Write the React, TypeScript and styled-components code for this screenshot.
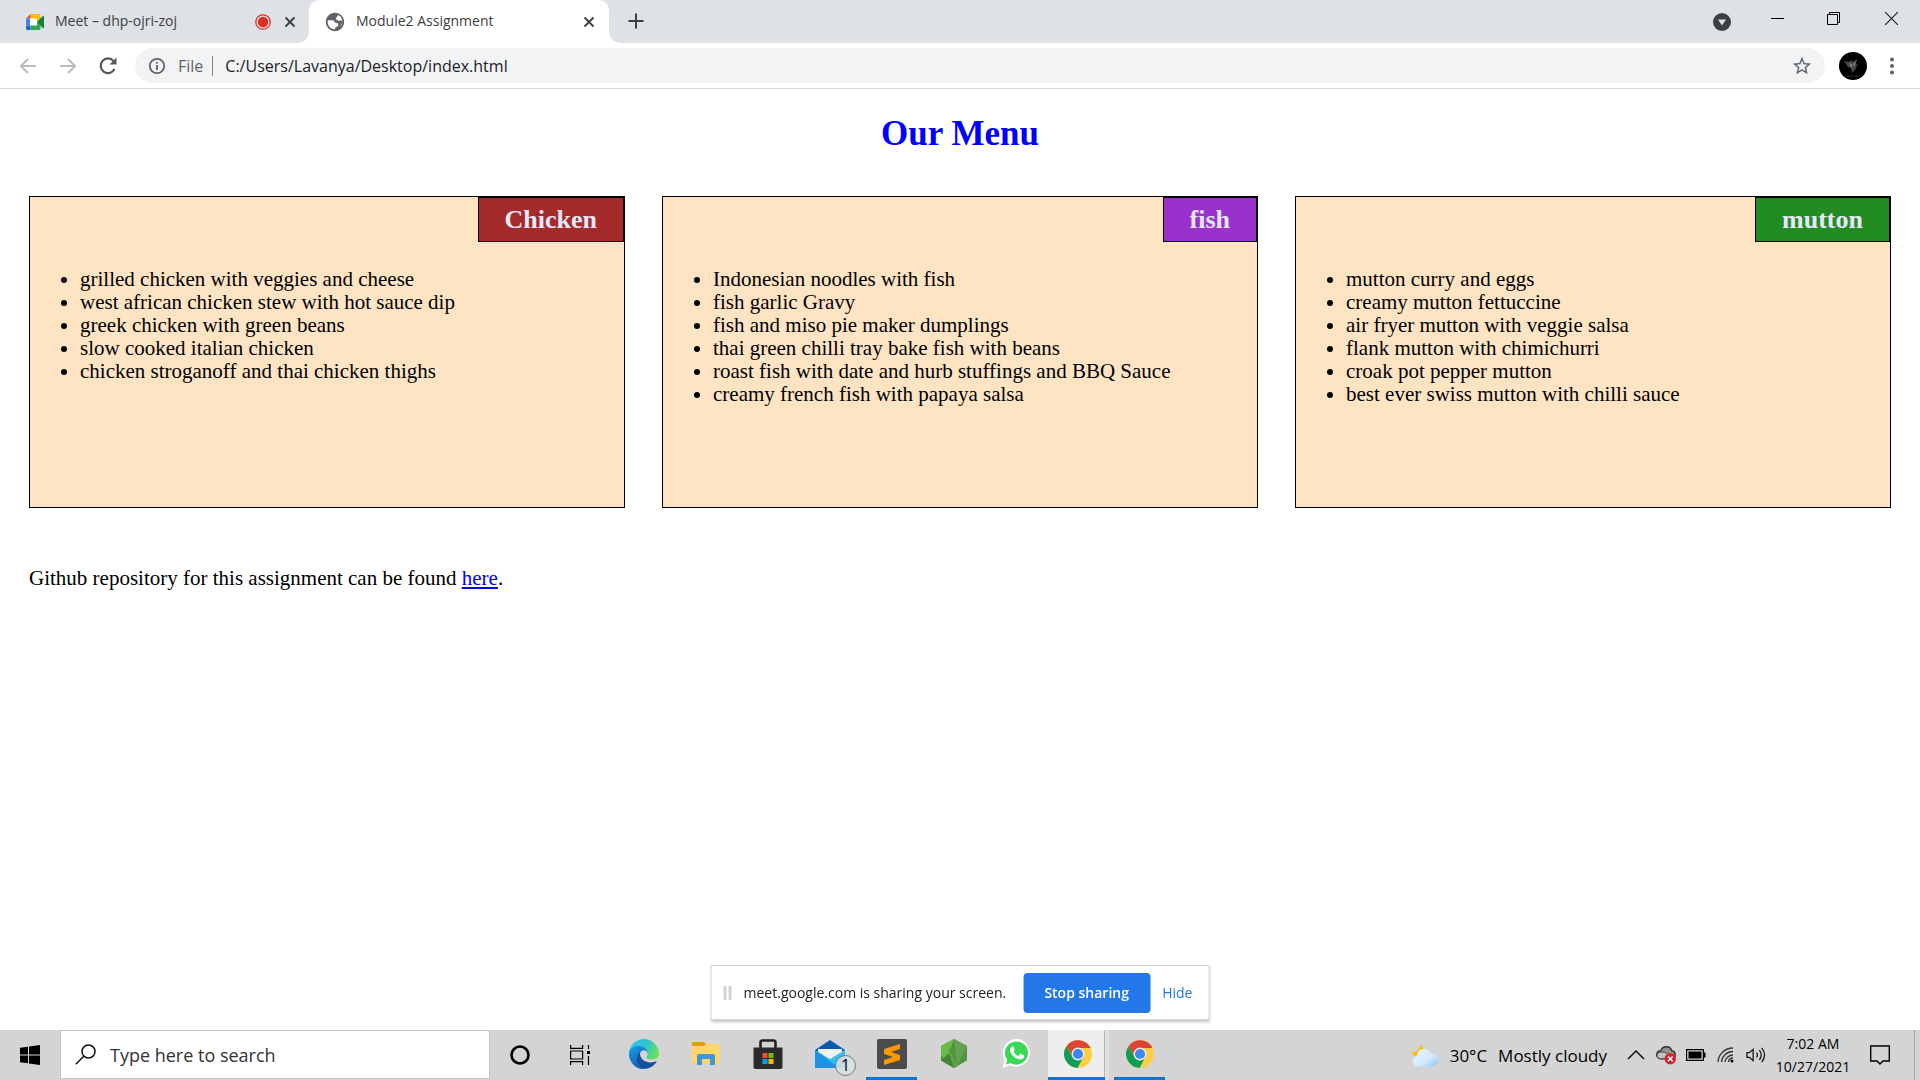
import React from "react";
import styled, { createGlobalStyle } from "styled-components";

const ui = `"Open Sans", "Noto Sans", sans-serif`;
const serif = `"Liberation Serif", serif`;

const GlobalStyle = createGlobalStyle`
  * { box-sizing: border-box; }
  body { margin: 0; background: #fff; }
  button, input { font: inherit; color: inherit; }
`;

const Screen = styled.div`
  min-height: 100vh;
  display: flex;
  flex-direction: column;
  font-family: ${ui};
`;

const IconButton = styled.button<{ $w?: number }>`
  width: ${(p) => p.$w ?? 20}px;
  height: 28px;
  padding: 0;
  border: 0;
  background: none;
  display: flex;
  align-items: center;
  justify-content: center;
  flex: none;
`;

/* ---------- Tab strip ---------- */

const TabStrip = styled.header`
  height: 43px;
  background: #dee1e6;
  display: flex;
  color: #3c4043;
  font-size: 14px;
`;

const Tab = styled.div<{ $active?: boolean }>`
  position: relative;
  width: ${(p) => (p.$active ? 300 : 309)}px;
  padding: 0 ${(p) => (p.$active ? "10px 0 15px" : "9px 0 25px")};
  display: flex;
  align-items: center;
  background: ${(p) => (p.$active ? "#fff" : "transparent")};
  border-radius: 10px 10px 0 0;
  &::before,
  &::after {
    content: "";
    display: ${(p) => (p.$active ? "block" : "none")};
    position: absolute;
    bottom: 0;
    width: 10px;
    height: 10px;
  }
  &::before {
    left: -10px;
    background: radial-gradient(circle at 0 0, transparent 9px, #fff 10px);
  }
  &::after {
    right: -10px;
    background: radial-gradient(circle at 100% 0, transparent 9px, #fff 10px);
  }
`;

const TabTitle = styled.button`
  flex: 1;
  padding: 0 0 2px 10px;
  border: 0;
  background: none;
  text-align: left;
  white-space: nowrap;
`;

const TabTools = styled.div`
  display: flex;
  align-items: center;
  gap: 9px;
`;

const NewTab = styled(IconButton)`
  margin: 7px 0 0 17px;
`;

const WindowTools = styled.div`
  margin-left: auto;
  display: flex;
  align-items: flex-start;
`;

const DropTool = styled(IconButton)`
  margin: 8px 19px 0 0;
`;

const WindowButton = styled(IconButton)`
  height: 37px;
`;

/* ---------- Toolbar ---------- */

const Toolbar = styled.nav`
  height: 46px;
  padding: 0 16px 0 18px;
  border-bottom: 1px solid #d6d8db;
  display: flex;
  align-items: center;
  background: #fff;
`;

const NavGroup = styled.div`
  display: flex;
  gap: 20px;
  margin-right: 17px;
`;

const Omnibox = styled.div`
  flex: 1;
  height: 35px;
  padding: 0 11px 0 12px;
  border-radius: 18px;
  background: #f1f3f4;
  display: flex;
  align-items: center;
  font-size: 16px;
  line-height: 24px;
`;

const Scheme = styled.label`
  margin-left: 11px;
  padding-right: 9px;
  border-right: 1px solid #80868b;
  line-height: 20px;
  color: #5f6368;
`;

const Address = styled.input`
  flex: 1;
  margin-left: 12px;
  padding: 0;
  border: 0;
  outline: 0;
  background: none;
  color: #202124;
`;

const Avatar = styled.button`
  width: 28px;
  height: 28px;
  margin: 0 13px 0 14px;
  padding: 0;
  border: 0;
  border-radius: 50%;
  overflow: hidden;
  background: #000;
`;

/* ---------- Menu page ---------- */

const Page = styled.main`
  flex: 1;
  padding: 24px 29px;
  font-family: ${serif};
  font-size: 21px;
  line-height: 23px;
  color: #000;
`;

const Title = styled.h1`
  margin: 0 0 41px;
  text-align: center;
  color: #0000ff;
  font-size: 35px;
  line-height: 42px;
`;

const Sections = styled.div`
  display: grid;
  grid-template-columns: repeat(3, 1fr);
  gap: 37px;
`;

const Card = styled.section`
  min-height: 312px;
  border: 1px solid #000;
  background: #ffe4c4;
  display: flex;
  flex-direction: column;
`;

const CardTitle = styled.h2<{ $bg: string }>`
  align-self: flex-end;
  margin: 0;
  padding: 7px 26px;
  border: 1px solid #000;
  background: ${(p) => p.$bg};
  color: #e6e6fa;
  font-size: 26px;
  line-height: 29px;
`;

const Dishes = styled.ul`
  margin: 26px 0;
  padding-left: 50px;
`;

const Footnote = styled.p`
  margin: 59px 0 0;
  a { color: #0000ee; }
`;

/* ---------- Sharing bar ---------- */

const ShareBar = styled.aside`
  position: fixed;
  left: 50%;
  bottom: 60px;
  transform: translateX(-50%);
  height: 55px;
  padding: 0 16px 0 12px;
  border: 1px solid #d4d4d4;
  background: #fff;
  box-shadow: 0 2px 3px rgba(0, 0, 0, 0.25);
  display: flex;
  align-items: center;
  font-size: 14px;
  color: #202124;
  white-space: nowrap;
`;

const Grip = styled.span`
  width: 8px;
  height: 14px;
  margin-right: 12px;
  border: solid #d3d3d3;
  border-width: 0 3px;
`;

const StopButton = styled.button`
  width: 127px;
  height: 40px;
  margin: 0 12px 0 17px;
  padding: 0;
  border: 0;
  border-radius: 4px;
  background: #2377e8;
  color: #fff;
  font-weight: 600;
`;

const HideButton = styled.button`
  padding: 0;
  border: 0;
  background: none;
  color: #2377e8;
`;

/* ---------- Taskbar ---------- */

const Taskbar = styled.footer`
  height: 50px;
  background: #d4d4d4;
  display: flex;
  color: #000;
`;

const TaskButton = styled.button`
  width: 60px;
  padding: 0;
  border: 0;
  background: none;
  display: flex;
  align-items: center;
  justify-content: center;
`;

const SearchBox = styled.label`
  width: 430px;
  margin-bottom: 1px;
  padding-left: 14px;
  border: 1px solid #c6c6c6;
  background: #fff;
  display: flex;
  align-items: center;
  gap: 14px;
  input {
    flex: 1;
    padding: 0;
    border: 0;
    outline: 0;
    background: none;
    font-size: 18px;
  }
  input::placeholder { color: #333; opacity: 1; }
`;

const Apps = styled.div`
  display: flex;
  gap: 11px;
  margin-left: 8px;
`;

const AppButton = styled.button<{ $running?: boolean; $active?: boolean }>`
  position: relative;
  width: 51px;
  padding: 0;
  border: 0;
  border-bottom: 3px solid ${(p) => (p.$running ? "#0078d7" : "transparent")};
  background: ${(p) => (p.$active ? "#eee" : "none")};
  display: flex;
  align-items: center;
  justify-content: center;
`;

const ActiveGroup = styled.div`
  display: flex;
  margin: 0 -6px 0 -4px;
  border-right: 4px solid #e0e0e0;
  ${AppButton} {
    width: 57px;
    padding-left: 3px;
    box-shadow: inset -1px 0 #b5b5b5;
  }
`;

const Count = styled.span`
  position: absolute;
  right: -1px;
  bottom: 1px;
  width: 21px;
  height: 21px;
  border: 1px solid #777;
  border-radius: 50%;
  background: rgba(214, 224, 228, 0.85);
  font-size: 16px;
  line-height: 19px;
  text-align: center;
`;

const Tray = styled.div`
  margin-left: auto;
  display: flex;
  align-items: center;
  font-size: 17px;
`;

const Weather = styled.button`
  padding: 0;
  border: 0;
  background: none;
  display: flex;
  align-items: center;
  gap: 11px;
  white-space: nowrap;
`;

const TrayIcons = styled.div`
  display: flex;
  gap: 10px;
  margin: 0 10px 0 19px;
`;

const Clock = styled.time`
  width: 74px;
  font-size: 14px;
  line-height: 23px;
  display: flex;
  flex-direction: column;
  align-items: center;
  white-space: nowrap;
`;

const Notices = styled(IconButton)`
  margin: 0 24px 0 20px;
`;

const ShowDesktop = styled.button`
  align-self: stretch;
  width: 6px;
  padding: 0;
  border: 0;
  border-left: 1px solid #a5a5a5;
  background: none;
`;

/* ---------- Drawings ---------- */

const CloseIcon = () => (
  <svg width="12" height="12" viewBox="0 0 12 12" stroke="#3c4043" strokeWidth="1.9">
    <path d="M1.5 1.5l9 9M10.5 1.5l-9 9" />
  </svg>
);

const MeetIcon = () => (
  <svg width="20" height="16" viewBox="0 0 20 16">
    <path d="M5 4h7v8H5z" fill="#fff" />
    <path d="M1 4.500L5.500 0v4.500z" fill="#ea4335" />
    <path d="M1 4.500h4v7H1z" fill="#4285f4" />
    <path d="M1 11.500h4.500V16h-3A1.500 1.500 0 0 1 1 14.500z" fill="#1967d2" />
    <path d="M5.500 0h8.500A1.500 1.500 0 0 1 15.500 1.500V5L12 8V4.500H5.500z" fill="#fbbc04" />
    <path d="M5.500 11.500H12V8l3.500 3v3.500A1.500 1.500 0 0 1 14 16H5.500z" fill="#34a853" />
    <path d="M12 8l5.800-6c.5-.4 1.200-.1 1.200.6v10.800c0 .7-.7 1-1.200.6z" fill="#188038" />
  </svg>
);

const GlobeIcon = () => (
  <svg width="22" height="22" viewBox="0 0 24 24" fill="#5f6368">
    <path d="M12 2C6.480 2 2 6.480 2 12s4.480 10 10 10 10-4.480 10-10S17.520 2 12 2zm-1 17.930c-3.950-.49-7-3.850-7-7.930 0-.62.08-1.210.21-1.790h5c2.400 0 2 2.900 4 3 2 .1 3.200.8 2.300 2.600-1 1.800-3.500 1-3.500 4.300zm6.900-2.540L20 12c0-2-2-1.500-3.500-1.500S13.500 10 13 8.500c-.5-1.600 1.500-1.500 2-4L16.500 5c2.200 1.300 3.500 4 3.500 7 0 2.080-.8 3.970-2.100 5.390z" />
  </svg>
);

const RecordIcon = () => (
  <svg width="16" height="16" viewBox="0 0 16 16">
    <circle cx="8" cy="8" r="7.200" fill="#f6dcdc" stroke="#d93025" strokeWidth="1.300" />
    <circle cx="8" cy="8" r="5.200" fill="#d93025" />
  </svg>
);

const Arrow = ({ flip }: { flip?: boolean }) => (
  <svg width="18" height="18" viewBox="0 0 18 18" fill="none" stroke="#babcbe" strokeWidth="2">
    <path d={flip ? "M1 9h15M9 2l7 7-7 7" : "M17 9H2M9 2L2 9l7 7"} />
  </svg>
);

const ReloadIcon = () => (
  <svg width="20" height="20" viewBox="0 0 20 20">
    <path d="M16.500 13A7.300 7.300 0 1 1 15.500 5" fill="none" stroke="#54585d" strokeWidth="2.200" />
    <path d="M18.500 1.500v7h-7z" fill="#54585d" />
  </svg>
);

const InfoIcon = () => (
  <svg width="18" height="18" viewBox="0 0 18 18" fill="none" stroke="#5f6368" strokeWidth="1.800">
    <circle cx="9" cy="9" r="7.200" />
    <path d="M9 8v5M9 5v1.800" />
  </svg>
);

const StarIcon = () => (
  <svg width="22" height="22" viewBox="0 0 24 24" fill="#5f6368">
    <path d="M22 9.240l-7.190-.62L12 2 9.190 8.630 2 9.240l5.460 4.730L5.820 21 12 17.270 18.180 21l-1.630-7.030L22 9.240zM12 15.400l-3.760 2.270 1-4.280-3.320-2.880 4.380-.38L12 6.100l1.710 4.040 4.380.38-3.320 2.880 1 4.280L12 15.400z" />
  </svg>
);

const AvatarArt = () => (
  <svg width="28" height="28" viewBox="0 0 28 28">
    <path d="M5 9l5 1 2-2 2 2 4-3-1 6 2-1-3 6-3 3-1-5-3-1-2-3z" fill="#454545" />
    <path d="M10 11l3 1v5zM14 12l3-3-2 6z" fill="#858585" />
    <path d="M8 24h12" stroke="#2c2c2c" />
  </svg>
);

const DotsIcon = () => (
  <svg width="6" height="20" viewBox="0 0 6 20" fill="#5f6368">
    <circle cx="3" cy="3.500" r="2" />
    <circle cx="3" cy="10" r="2" />
    <circle cx="3" cy="16.500" r="2" />
  </svg>
);

const DropIcon = () => (
  <svg width="18" height="18" viewBox="0 0 18 18">
    <circle cx="9" cy="9" r="9" fill="#3c4043" />
    <path d="M5 6.500h8L9 12.500z" fill="#dee1e6" />
  </svg>
);

const MinIcon = () => (
  <svg width="13" height="13" viewBox="0 0 13 13"><path d="M0 6h13v1H0z" /></svg>
);

const RestoreIcon = () => (
  <svg width="13" height="13" viewBox="0 0 13 13" fill="none" stroke="#000">
    <path d="M.5 2.500h10v10H.5zM2.500 2.500v-2h10v10h-2" />
  </svg>
);

const WinCloseIcon = () => (
  <svg width="13" height="13" viewBox="0 0 13 13" stroke="#222" strokeWidth="1.200">
    <path d="M0 0l13 13M13 0L0 13" />
  </svg>
);

const WindowsIcon = () => (
  <svg width="20" height="20" viewBox="0 0 20 20">
    <path d="M0 2.800l8-1.100v7.800H0zM9 1.500L20 0v9.500H9zM0 10.500h8v7.800l-8-1.100zM9 10.500h11V20L9 18.500z" />
  </svg>
);

const SearchIcon = () => (
  <svg width="21" height="21" viewBox="0 0 21 21" fill="none" stroke="#111" strokeWidth="1.500">
    <circle cx="13.500" cy="7.500" r="6.500" />
    <path d="M8.800 12.200L.8 20.200" />
  </svg>
);

const CortanaIcon = () => (
  <svg width="20" height="20" viewBox="0 0 20 20" fill="none" stroke="#000" strokeWidth="2.600">
    <circle cx="10" cy="10" r="8.500" />
  </svg>
);

const TaskViewIcon = () => (
  <svg width="21" height="20" viewBox="0 0 21 20" fill="none" stroke="#000" strokeWidth="1.200">
    <path d="M.6 0v3.400h12V0M.6 20v-3.400h12V20M.6 6h12v8H.6zM18.500 0v4M18.500 11v9" />
    <path d="M17 6h3v3h-3z" fill="#000" stroke="none" />
  </svg>
);

const EdgeIcon = () => (
  <svg width="30" height="30" viewBox="0 0 256 256">
    <defs>
      <linearGradient id="edgeTop" x1="0" x2="1" y1="0.3" y2="0.6">
        <stop offset="0" stopColor="#35c1f1" />
        <stop offset=".5" stopColor="#2cc4d0" />
        <stop offset="1" stopColor="#6ee052" />
      </linearGradient>
      <linearGradient id="edgeMid" x1="0" x2="0.6" y1="0" y2="1">
        <stop offset="0" stopColor="#1ca0e6" />
        <stop offset="1" stopColor="#0b5bb5" />
      </linearGradient>
    </defs>
    <path fill="#12509b" d="M231 190c-4 2-7 4-11 5a102 102 0 0 1-36 6c-48 0-90-33-90-75 0-12 7-22 17-28-43 2-54 47-54 73 0 75 69 82 84 82 8 0 20-2 27-5l1 0a128 128 0 0 0 67-53c2-4-1-7-5-5z" />
    <path fill="url(#edgeMid)" d="M106 241a79 79 0 0 1-23-21 81 81 0 0 1 30-120c3-1 8-4 15-4a31 31 0 0 1 25 12c3 5 6 11 6 17 0-1 25-80-80-80C33 45 0 87 0 125c0 26 5 45 12 58a128 128 0 0 0 157 67 76 76 0 0 1-63-9z" />
    <path fill="url(#edgeTop)" d="M152 149c-1 1-4 3-4 6 0 3 2 6 5 9 17 12 50 10 50 10 13 0 25-4 35-10 11-6 18-20 18-40 0-26-9-43-13-51C220 28 176 0 128 0 58 0 1 56 0 126c0-37 37-66 80-66 4 0 24 0 42 10 16 8 25 19 31 29 6 11 8 25 8 30 0 6-3 13-9 20z" />
  </svg>
);

const FolderIcon = () => (
  <svg width="28" height="24" viewBox="0 0 28 24">
    <path d="M0 1.500C0 .7.500 0 1.500 0H12l2 2v3H0z" fill="#e3a008" />
    <path d="M0 4h12l2-2h13.500v20H0z" fill="#ffd667" />
    <path d="M5 23V14a2 2 0 0 1 2-2h14a2 2 0 0 1 2 2v9h-5v-6h-8v6z" fill="#3f96dd" />
  </svg>
);

const StoreIcon = () => (
  <svg width="30" height="30" viewBox="0 0 30 30">
    <path d="M7.500 9V3.500a2 2 0 0 1 2-2h11a2 2 0 0 1 2 2V9" fill="none" stroke="#222" strokeWidth="2.600" />
    <path d="M.5 8.500h29V28a2 2 0 0 1-2 2h-25a2 2 0 0 1-2-2z" fill="#2b2b2b" />
    <path d="M9.500 14h5v5h-5z" fill="#f25022" />
    <path d="M15.500 14h5v5h-5z" fill="#7fba00" />
    <path d="M9.500 20h5v5h-5z" fill="#00a4ef" />
    <path d="M15.500 20h5v5h-5z" fill="#ffb900" />
  </svg>
);

const MailIcon = () => (
  <svg width="30" height="28" viewBox="0 0 30 28">
    <path d="M0 10L15 0l15 10v7H0z" fill="#0a5aad" />
    <path d="M3 9h24v12H3z" fill="#f3f3f3" />
    <path d="M0 10l15 9 15-9v18H0z" fill="#36bdf0" />
    <path d="M0 10l24 18H0z" fill="#1b93e0" />
  </svg>
);

const SublimeIcon = () => (
  <svg width="30" height="30" viewBox="0 0 30 30">
    <rect width="30" height="30" rx="2" fill="#4b4b4b" />
    <path d="M23 5v5l-9 3 9 3v5L7 26v-5l9-3-9-3v-5z" fill="#ff9800" />
  </svg>
);

const NodeIcon = () => (
  <svg width="26" height="29" viewBox="0 0 26 29">
    <path d="M13 0l13 7v14.500L13 29 0 21.500V7z" fill="#53923f" />
    <path d="M13 0L0 7v9l5 6z" fill="#6cbb46" />
    <path d="M13 0l13 7-10 20z" fill="#64a154" />
    <path d="M0 21.500L7 15l9 12-3 2z" fill="#458237" />
    <path d="M5 4l8 25 4-2z" fill="#5fa448" />
  </svg>
);

const WhatsAppIcon = () => (
  <svg width="28" height="29" viewBox="0 0 28 29">
    <path d="M14.500 0A13.700 13.700 0 0 1 28 14c0 10-11 16.500-20 12.300L.5 29l2-8C-2.500 12 4 0 14.500 0z" fill="#fff" />
    <path d="M14.500 2.500A11.500 11.500 0 0 1 26 14c0 9-10 14.500-17.500 10L4 25.500l1.300-4.500C-.5 13 5 2.500 14.500 2.500z" fill="#37d853" />
    <path d="M10 7.500c.8-.4 1.500 0 1.700.7l1 2.300c.2.500-.1 1.200-1.100 2.200 1 2 2.700 3.500 4.800 4.300l1.500-1.800c.3-.4.800-.4 1.200-.2l2.600 1.300c.5.2.6.6.5 1.100-.4 2.200-2.500 3.300-4.400 3-5-.7-9-5-9.800-8.700-.3-1.700.7-3.500 2-4.200z" fill="#fff" />
  </svg>
);

const ChromeIcon = () => (
  <svg width="28" height="28" viewBox="0 0 28 28">
    <circle cx="14" cy="14" r="14" fill="#ffce44" />
    <path d="M2.500 6.200A14 14 0 0 1 26.600 8H14a6 6 0 0 0-5.200 9z" fill="#db4437" />
    <path d="M2.500 6.200A14 14 0 0 0 13.500 28l5.700-10.800A6.400 6.400 0 0 1 8.500 17z" fill="#0f9d58" />
    <circle cx="14" cy="14" r="6.400" fill="#f1f1f1" />
    <circle cx="14" cy="14" r="5.100" fill="#4285f4" />
  </svg>
);

const WeatherIcon = () => (
  <svg width="28" height="24" viewBox="0 0 28 24">
    <defs>
      <linearGradient id="cloud" x1="0" x2="1" y1="0" y2="1">
        <stop offset="0" stopColor="#e6f6ff" />
        <stop offset=".6" stopColor="#cfeafc" />
        <stop offset="1" stopColor="#8cc5ee" />
      </linearGradient>
    </defs>
    <path d="M11 0c-.5 4 1.500 6.500 5.500 6-.5 5-5 9-9 8.500C4 14 1.500 12 0 9.500 5 10 9 5.500 11 0z" fill="#f8bd18" />
    <path d="M7 23.500a5.500 5.500 0 0 1-1-10.800C6.500 4.500 17 3 19.500 10.500c4.500-.5 8 2.500 8 6.500s-3 6.500-6.500 6.500z" fill="url(#cloud)" />
  </svg>
);

const ChevronIcon = () => (
  <svg width="18" height="18" viewBox="0 0 18 18" fill="none" stroke="#111" strokeWidth="1.500">
    <path d="M1 13l8-8 8 8" />
  </svg>
);

const CloudErrorIcon = () => (
  <svg width="21" height="20" viewBox="0 0 21 20">
    <path d="M5 14a4.300 4.300 0 0 1 0-8.600C7 0 15 0 16.500 5.500c3 .5 4 3 3.500 6L12 14z" fill="#929292" stroke="#2e2e2e" strokeWidth="1.400" />
    <path d="M1 10c1-4 8-4 11-1l3 5H5c-2 0-4-1.500-4-4z" fill="#c3c3c3" stroke="#444" />
    <circle cx="15" cy="14" r="6" fill="#de1f2b" />
    <path d="M12.500 11.500l5 5m0-5l-5 5" stroke="#fff" strokeWidth="1.600" />
  </svg>
);

const BatteryIcon = () => (
  <svg width="20" height="12" viewBox="0 0 20 12">
    <path d="M.6.6h16.800v10.800H.6z" fill="none" stroke="#000" strokeWidth="1.200" />
    <path d="M2.500 2.500h13v7h-13zM18 3.500h1.500v5H18z" />
  </svg>
);

const WifiIcon = () => (
  <svg width="18" height="18" viewBox="0 0 18 18" fill="none" stroke="#333" strokeWidth="1.300">
    <path d="M1 16A15 15 0 0 1 16 2M4.500 16A11.500 11.500 0 0 1 16 5.500M8 16a8 8 0 0 1 8-7M11.500 16A4.500 4.500 0 0 1 16 12" />
    <circle cx="15" cy="15" r="1.500" fill="#000" stroke="none" />
  </svg>
);

const SpeakerIcon = () => (
  <svg width="21" height="18" viewBox="0 0 21 18" fill="none" stroke="#111" strokeWidth="1.300">
    <path d="M1 6.500h2.500L7.500 3v12l-4-3.500H1zM11 6.500q2 2.500 0 5M14 4q4 5 0 10M16.500 1.500q6 7.500 0 15" />
  </svg>
);

const NoticeIcon = () => (
  <svg width="20" height="20" viewBox="0 0 20 20" fill="none" stroke="#000" strokeWidth="1.400">
    <path d="M.7 1h18.600v15H13l-3 3-3-3H.7z" />
  </svg>
);

/* ---------- Content ---------- */

const menu = [
  {
    name: "Chicken",
    color: "#a52a2a",
    dishes: [
      "grilled chicken with veggies and cheese",
      "west african chicken stew with hot sauce dip",
      "greek chicken with green beans",
      "slow cooked italian chicken",
      "chicken stroganoff and thai chicken thighs",
    ],
  },
  {
    name: "fish",
    color: "#9932cc",
    dishes: [
      "Indonesian noodles with fish",
      "fish garlic Gravy",
      "fish and miso pie maker dumplings",
      "thai green chilli tray bake fish with beans",
      "roast fish with date and hurb stuffings and BBQ Sauce",
      "creamy french fish with papaya salsa",
    ],
  },
  {
    name: "mutton",
    color: "#228b22",
    dishes: [
      "mutton curry and eggs",
      "creamy mutton fettuccine",
      "air fryer mutton with veggie salsa",
      "flank mutton with chimichurri",
      "croak pot pepper mutton",
      "best ever swiss mutton with chilli sauce",
    ],
  },
];

export default function App() {
  return (
    <Screen>
      <GlobalStyle />
      <TabStrip>
        <Tab>
          <MeetIcon />
          <TabTitle>Meet – dhp-ojri-zoj</TabTitle>
          <TabTools>
            <RecordIcon />
            <IconButton aria-label="Close tab"><CloseIcon /></IconButton>
          </TabTools>
        </Tab>
        <Tab $active>
          <GlobeIcon />
          <TabTitle>Module2 Assignment</TabTitle>
          <IconButton aria-label="Close tab"><CloseIcon /></IconButton>
        </Tab>
        <NewTab aria-label="New tab">
          <svg width="16" height="16" viewBox="0 0 16 16" stroke="#3c4043" strokeWidth="2">
            <path d="M8 .5v15M.5 8h15" />
          </svg>
        </NewTab>
        <WindowTools>
          <DropTool aria-label="Search tabs"><DropIcon /></DropTool>
          <WindowButton $w={52} aria-label="Minimize"><MinIcon /></WindowButton>
          <WindowButton $w={60} aria-label="Restore"><RestoreIcon /></WindowButton>
          <WindowButton $w={57} aria-label="Close"><WinCloseIcon /></WindowButton>
        </WindowTools>
      </TabStrip>

      <Toolbar>
        <NavGroup>
          <IconButton aria-label="Back"><Arrow /></IconButton>
          <IconButton aria-label="Forward"><Arrow flip /></IconButton>
          <IconButton aria-label="Reload"><ReloadIcon /></IconButton>
        </NavGroup>
        <Omnibox>
          <IconButton aria-label="Site information"><InfoIcon /></IconButton>
          <Scheme htmlFor="address">File</Scheme>
          <Address id="address" defaultValue="C:/Users/Lavanya/Desktop/index.html" />
          <IconButton $w={24} aria-label="Bookmark"><StarIcon /></IconButton>
        </Omnibox>
        <Avatar aria-label="Profile"><AvatarArt /></Avatar>
        <IconButton $w={24} aria-label="Browser menu"><DotsIcon /></IconButton>
      </Toolbar>

      <Page>
        <Title>Our Menu</Title>
        <Sections>
          {menu.map((m) => (
            <Card key={m.name}>
              <CardTitle $bg={m.color}>{m.name}</CardTitle>
              <Dishes>
                {m.dishes.map((d) => <li key={d}>{d}</li>)}
              </Dishes>
            </Card>
          ))}
        </Sections>
        <Footnote>
          Github repository for this assignment can be found <a href="#repository">here</a>.
        </Footnote>
      </Page>

      <ShareBar>
        <Grip />
        <span>meet.google.com is sharing your screen.</span>
        <StopButton>Stop sharing</StopButton>
        <HideButton>Hide</HideButton>
      </ShareBar>

      <Taskbar>
        <TaskButton aria-label="Start"><WindowsIcon /></TaskButton>
        <SearchBox>
          <SearchIcon />
          <input type="text" placeholder="Type here to search" aria-label="Type here to search" />
        </SearchBox>
        <TaskButton aria-label="Cortana"><CortanaIcon /></TaskButton>
        <TaskButton aria-label="Task view"><TaskViewIcon /></TaskButton>
        <Apps>
          <AppButton aria-label="Edge"><EdgeIcon /></AppButton>
          <AppButton aria-label="File Explorer"><FolderIcon /></AppButton>
          <AppButton aria-label="Store"><StoreIcon /></AppButton>
          <AppButton aria-label="Mail"><MailIcon /><Count>1</Count></AppButton>
          <AppButton $running aria-label="Sublime Text"><SublimeIcon /></AppButton>
          <AppButton aria-label="Node"><NodeIcon /></AppButton>
          <AppButton aria-label="WhatsApp"><WhatsAppIcon /></AppButton>
          <ActiveGroup>
            <AppButton $running $active aria-label="Chrome, current window"><ChromeIcon /></AppButton>
          </ActiveGroup>
          <AppButton $running aria-label="Chrome"><ChromeIcon /></AppButton>
        </Apps>
        <Tray>
          <Weather>
            <WeatherIcon />
            <span>30°C</span>
            <span>Mostly cloudy</span>
          </Weather>
          <TrayIcons>
            <IconButton aria-label="Show hidden icons"><ChevronIcon /></IconButton>
            <IconButton aria-label="OneDrive"><CloudErrorIcon /></IconButton>
            <IconButton aria-label="Battery"><BatteryIcon /></IconButton>
            <IconButton aria-label="Network"><WifiIcon /></IconButton>
            <IconButton aria-label="Volume"><SpeakerIcon /></IconButton>
          </TrayIcons>
          <Clock>
            <span>7:02 AM</span>
            <span>10/27/2021</span>
          </Clock>
          <Notices aria-label="Notifications"><NoticeIcon /></Notices>
          <ShowDesktop aria-label="Show desktop" />
        </Tray>
      </Taskbar>
    </Screen>
  );
}
